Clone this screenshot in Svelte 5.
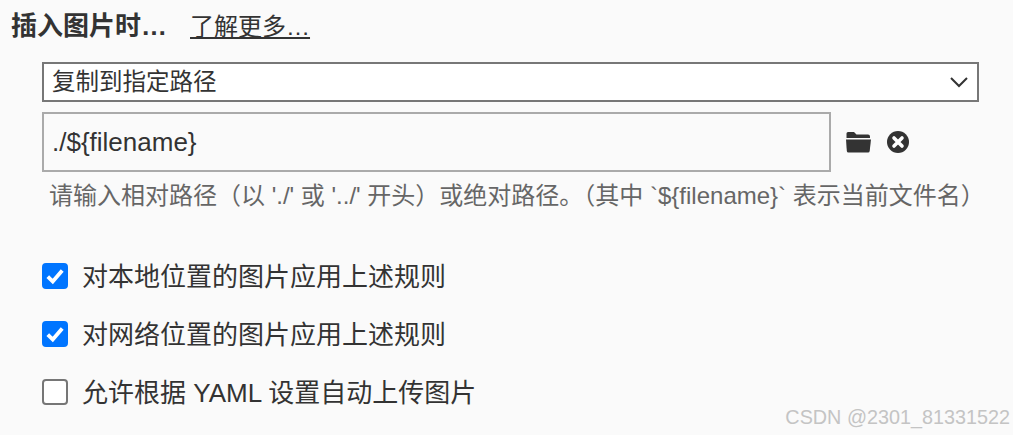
<script>
  let imageAction = $state("复制到指定路径");
  let rootPath = $state("./${filename}");
  let applyLocal = $state(true);
  let applyNetwork = $state(true);
  let autoUpload = $state(false);
</script>

<div class="pane">
  <div class="title-row">
    <span class="title">插入图片时…</span>
    <span class="more">了解更多…</span>
  </div>

  <div class="body">
    <div class="select">
      <span class="select-text">{imageAction}</span>
      <svg class="chevron" width="20" height="12" viewBox="0 0 20 12">
        <path d="M2 2l8 8 8-8" fill="none" stroke="#333" stroke-width="2" />
      </svg>
    </div>

    <div class="path-row">
      <input class="path-input" type="text" bind:value={rootPath} />
      <div class="icons">
        <svg width="27" height="22" viewBox="0 0 26 22">
          <path d="M1 2.500q0-1.500 1.500-1.500h6l2.500 2.500h11.500q2 0 2 2v1.500h-23.500z" fill="#333" />
          <path d="M0.500 8.500h25l-1.300 11.500q-.2 1.500-1.700 1.500h-19.500q-1.500 0-1.700-1.500z" fill="#333" />
        </svg>
        <svg width="22" height="22" viewBox="0 0 22 22">
          <circle cx="11" cy="11" r="11" fill="#333" />
          <path d="M7 7l8 8M15 7l-8 8" stroke="#fff" stroke-width="3.600" stroke-linecap="round" />
        </svg>
      </div>
    </div>

    <p class="hint">请输入相对路径（以 './' 或 '../' 开头）或绝对路径。（其中 `${"{"}filename}` 表示当前文件名）</p>

    <div class="checks">
      <label class="check">
        <input type="checkbox" bind:checked={applyLocal} />
        <span class="box">
          {#if applyLocal}
            <svg width="20" height="20" viewBox="0 0 18 18"><path d="M2.500 9.500l4.500 4.500 8.500-10" fill="none" stroke="#fff" stroke-width="3.400" /></svg>
          {/if}
        </span>
        <span class="check-text">对本地位置的图片应用上述规则</span>
      </label>
      <label class="check">
        <input type="checkbox" bind:checked={applyNetwork} />
        <span class="box">
          {#if applyNetwork}
            <svg width="20" height="20" viewBox="0 0 18 18"><path d="M2.500 9.500l4.500 4.500 8.500-10" fill="none" stroke="#fff" stroke-width="3.400" /></svg>
          {/if}
        </span>
        <span class="check-text">对网络位置的图片应用上述规则</span>
      </label>
      <label class="check">
        <input type="checkbox" bind:checked={autoUpload} />
        <span class="box">
          {#if autoUpload}
            <svg width="20" height="20" viewBox="0 0 18 18"><path d="M2.500 9.500l4.500 4.500 8.500-10" fill="none" stroke="#fff" stroke-width="3.400" /></svg>
          {/if}
        </span>
        <span class="check-text">允许根据 YAML 设置自动上传图片</span>
      </label>
    </div>
  </div>

  <div class="watermark">CSDN @2301_81331522</div>
</div>

<style>
  :global(body) {
    background: #fafafa;
    overflow: hidden;
  }

  .pane {
    position: relative;
    width: 1013px;
    height: 435px;
    padding: 11px 0 0 11px;
    box-sizing: border-box;
    color: #333;
    font-family: "Liberation Sans", "Noto Sans CJK SC", sans-serif;
    font-size: 24px;
  }

  .title-row {
    display: flex;
    align-items: baseline;
    gap: 23px;
    height: 34px;
    line-height: 30px;
  }

  .title {
    font-size: 26px;
    font-weight: 700;
  }

  .more {
    text-decoration: underline;
  }

  .body {
    margin: 17px 0 0 31px;
  }

  .select {
    display: flex;
    align-items: center;
    justify-content: space-between;
    width: 937px;
    height: 40px;
    box-sizing: border-box;
    padding: 0 8px;
    background: #fff;
    border: 2px solid #777;
    font-size: 23.500px;
  }

  .select-text {
    padding-bottom: 4px;
  }

  .path-row {
    display: flex;
    align-items: center;
    margin-top: 10px;
  }

  .path-input {
    width: 789px;
    height: 60px;
    box-sizing: border-box;
    padding: 0 8px;
    background: transparent;
    border: 2px solid #aaa;
    outline: none;
    color: #333;
    font: inherit;
    font-size: 26px;
  }

  .icons {
    display: flex;
    align-items: center;
    gap: 15px;
    margin-left: 14px;
  }

  .hint {
    margin: 9px 0 0 7px;
    color: #666;
    font-size: 24px;
    line-height: 30px;
    white-space: nowrap;
  }

  .checks {
    display: flex;
    flex-direction: column;
    gap: 32px;
    margin-top: 52px;
    font-size: 26px;
  }

  .check {
    display: flex;
    align-items: center;
    gap: 14px;
    height: 26px;
  }

  .check input {
    display: none;
  }

  .check-text {
    padding-bottom: 4px;
  }

  .box {
    display: flex;
    align-items: center;
    justify-content: center;
    width: 26px;
    height: 26px;
    box-sizing: border-box;
    border: 2px solid #767676;
    border-radius: 4px;
    background: #fff;
  }

  .check input:checked + .box {
    background: #0075ff;
    border-color: #0075ff;
  }

  .watermark {
    position: absolute;
    right: 3px;
    top: 405px;
    color: #c4c4c4;
    font-size: 19.800px;
    line-height: 24px;
  }
</style>
